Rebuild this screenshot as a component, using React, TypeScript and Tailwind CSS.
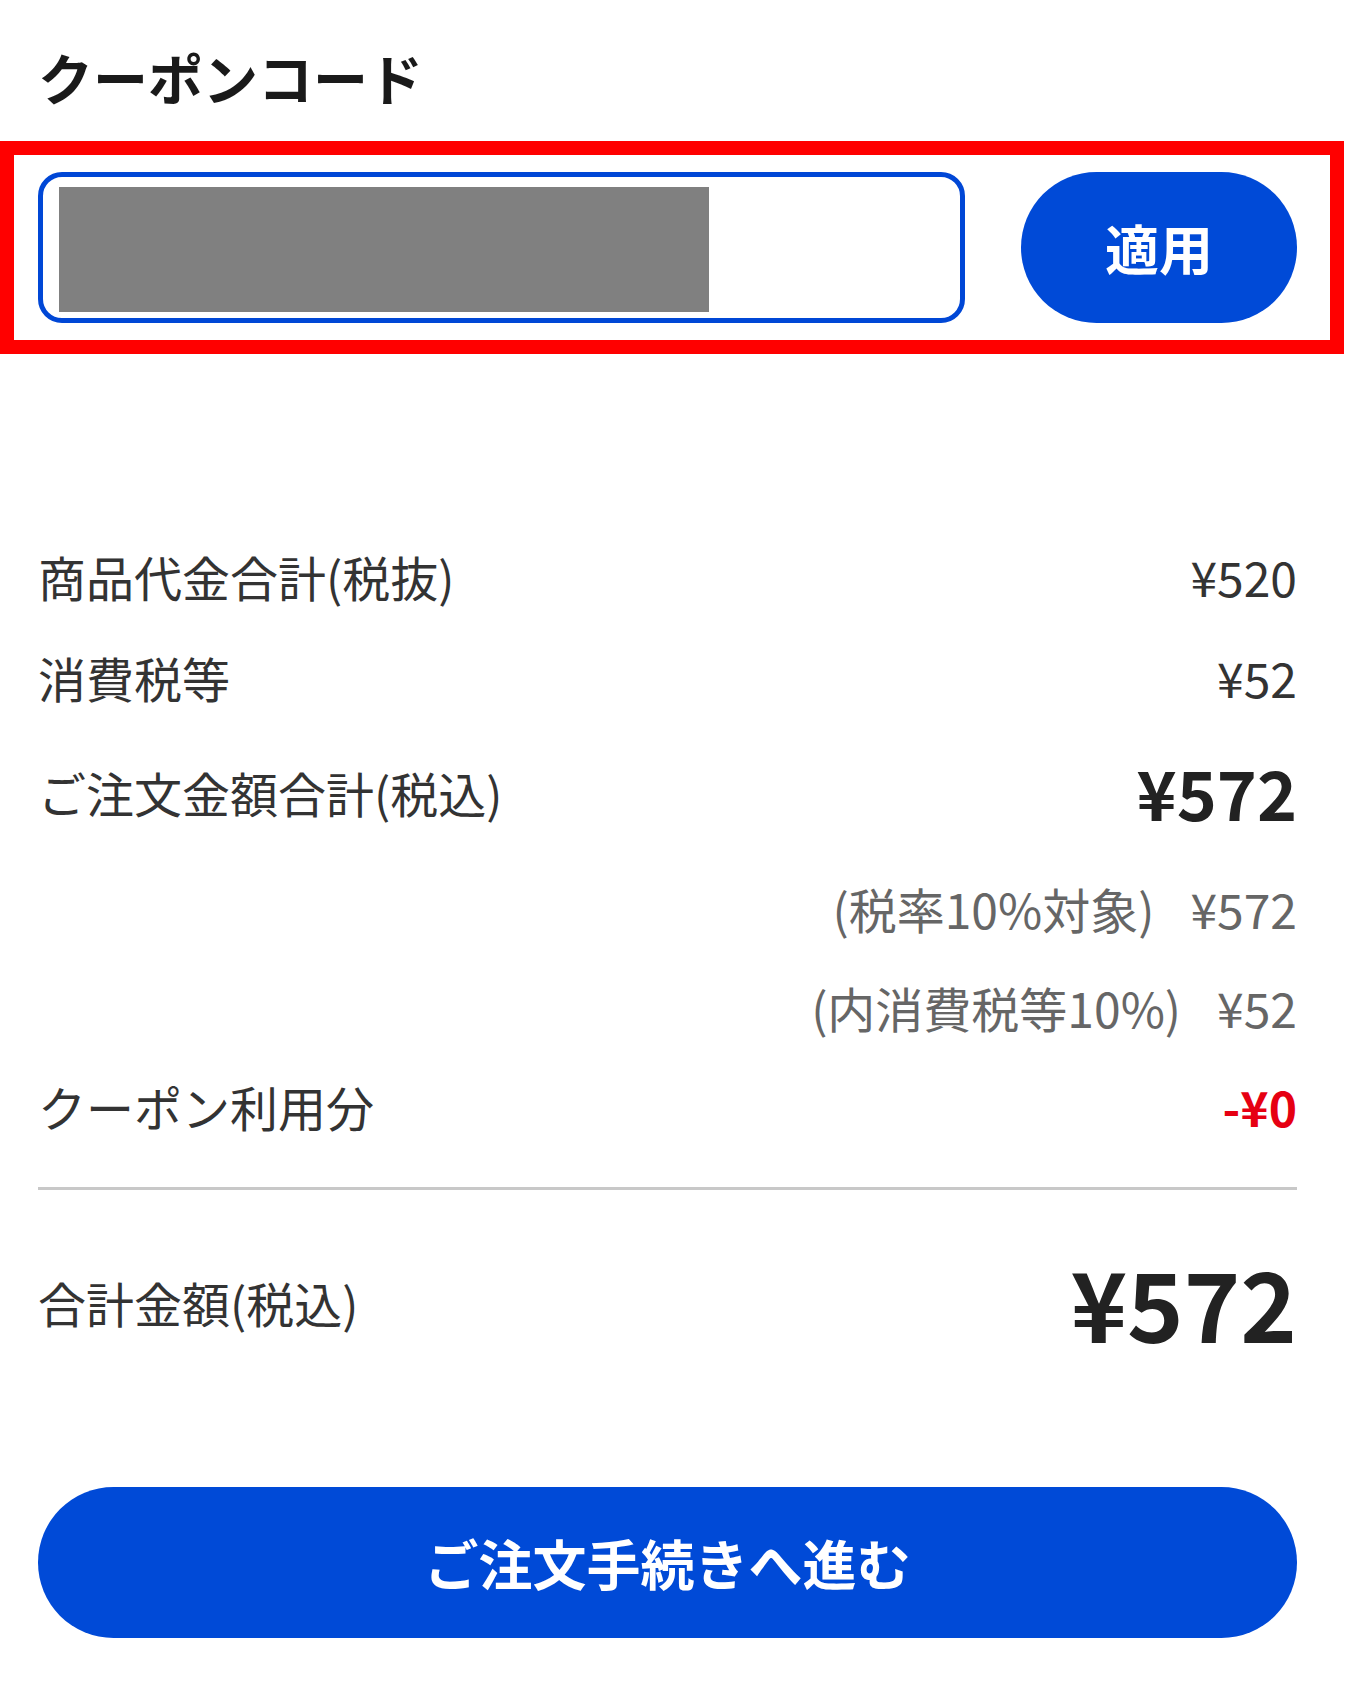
import React from "react";

function Row({
  label,
  value,
  valueClass,
  className,
}: {
  label?: string;
  value: React.ReactNode;
  valueClass: string;
  className: string;
}) {
  return (
    <div className={`flex items-center justify-between ${className}`}>
      <span className="text-[48px] leading-[72px] text-[#333333]">{label}</span>
      <span className={valueClass}>{value}</span>
    </div>
  );
}

export default function App() {
  return (
    <div className="w-[1351px] min-h-[1685px] bg-white font-['Noto_Sans_CJK_JP','Noto_Sans',sans-serif] text-[#333333]">
      <h2 className="pl-[38px] pt-[49px] text-[55px] leading-[54px] font-bold text-[#1a1a1a]">
        クーポンコード
      </h2>

      <div className="mt-[38px] flex w-[1344px] items-center justify-between border-[14px] border-[#ff0000] pl-[24px] pr-[33px] py-[17px]">
        <div className="h-[151px] w-[927px] rounded-[24px] border-[5px] border-[#0047d6] pl-[16px] pt-[10px]">
          <div className="h-[125px] w-[650px] bg-[#808080]" />
        </div>
        <button className="flex h-[151px] w-[276px] items-center justify-center rounded-full bg-[#004ad7] text-[54px] font-bold leading-none text-white">
          適用
        </button>
      </div>

      <div className="ml-[38px] w-[1259px]">
        <Row
          className="mt-[186px] h-[72px]"
          label="商品代金合計(税抜)"
          value="¥520"
          valueClass="text-[48px] leading-[72px] text-[#333333]"
        />
        <Row
          className="mt-[29px] h-[72px]"
          label="消費税等"
          value="¥52"
          valueClass="text-[48px] leading-[72px] text-[#333333]"
        />
        <Row
          className="mt-[25px] h-[108px]"
          label="ご注文金額合計(税込)"
          value="¥572"
          valueClass="text-[68px] leading-[108px] font-bold text-[#222222]"
        />
        <div className="mt-[26px] flex h-[72px] items-center justify-end text-[48px] leading-[72px] text-[#666666]">
          <span>(税率10%対象)</span>
          <span className="ml-[36px]">¥572</span>
        </div>
        <div className="mt-[27px] flex h-[72px] items-center justify-end text-[48px] leading-[72px] text-[#666666]">
          <span>(内消費税等10%)</span>
          <span className="ml-[36px]">¥52</span>
        </div>
        <Row
          className="mt-[27px] h-[72px]"
          label="クーポン利用分"
          value="-¥0"
          valueClass="text-[48px] leading-[72px] font-bold text-[#e60012]"
        />

        <div className="mt-[45px] h-[3px] w-full bg-[#c8c8c8]" />

        <div className="mt-[37px] flex h-[150px] items-center justify-between">
          <span className="text-[48px] leading-[72px] text-[#333333]">合計金額(税込)</span>
          <span className="text-[96px] leading-[150px] font-bold text-[#222222]">¥572</span>
        </div>

        <button className="mt-[110px] flex h-[151px] w-full items-center justify-center rounded-full bg-[#004ad7] text-[54px] font-bold leading-none text-white">
          ご注文手続きへ進む
        </button>
      </div>
    </div>
  );
}
